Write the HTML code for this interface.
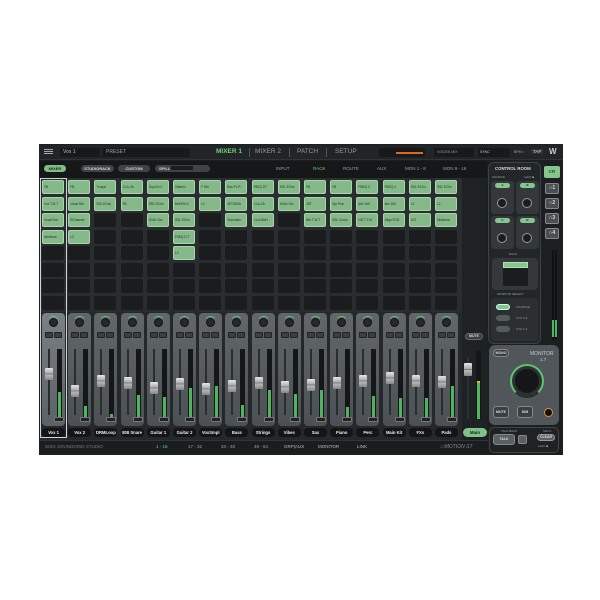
<!DOCTYPE html>
<html><head><meta charset="utf-8"><style>
*{box-sizing:border-box;margin:0;padding:0}
body{width:600px;height:600px;background:#fff;position:relative;overflow:hidden;font-family:"Liberation Sans",sans-serif}
.a{position:absolute}
#p{left:39px;top:144px;width:524px;height:311px;background:#1c1f21}
.t{position:absolute;font-size:5px;color:#9aa0a4;white-space:nowrap}
.col{position:absolute;top:180px;width:22px}
.c{height:14px;margin-bottom:2.5px;background:#1a1c1d;border-radius:2px;font-size:3.2px;color:#1d2a1e;padding:4px 1px;overflow:hidden;white-space:nowrap}
.c.g{background:#86b98a;border:1px solid #a8d6aa}
.s{position:absolute;top:313px;width:23px;height:113px;background:linear-gradient(#626769,#4b5054);border-radius:4px}
.k{position:absolute;left:7px;top:5px;width:9px;height:9px;border-radius:50%;background:#262829;border:1.5px solid #101112}
.k:before{content:"";position:absolute;left:-3px;top:-3px;right:-3px;bottom:-3px;border-radius:50%;border:1.2px solid transparent;border-top-color:#5fc46e}
.m{position:absolute;top:19px;width:8px;height:6px;background:#3b3f42;border:1px solid #222;border-radius:1px}
.tr{position:absolute;left:6px;top:36px;width:2px;height:66px;background:#2a2d2f}
.me{position:absolute;left:15px;top:36px;width:5px;height:69px;background:#141617}
.lv{position:absolute;left:1px;bottom:0;width:3px;background:#4fb35f}
.h{position:absolute;left:3px;width:8px;height:12px;background:linear-gradient(#e6e6e6,#aaa 45%,#555 50%,#bbb 55%,#888);border-radius:1px}
.v{position:absolute;left:12px;top:104px;width:10px;height:5px;background:#222;border:1px solid #777;border-radius:1px}
.n{position:absolute;top:115px;left:0;width:23px;height:9px;background:#121415;border-radius:4px;color:#eee;font-size:4.2px;font-weight:bold;text-align:center;line-height:9px;white-space:nowrap;overflow:hidden}
.btn{position:absolute;border-radius:5px;font-size:4px;text-align:center;color:#ddd;font-weight:bold}
</style></head><body>
<div id="p" class="a"></div>
<!-- top bar -->
<div class="a" style="left:39px;top:145px;width:524px;height:15px;background:#222527;border-bottom:1px solid #333"></div>
<div class="a" style="left:44px;top:149px;width:9px;height:1px;background:#aaa;box-shadow:0 2px #aaa,0 4px #aaa"></div>
<div class="a" style="left:60px;top:148px;width:40px;height:9px;background:#17191a"></div>
<div class="t" style="left:63px;top:149px;color:#bbb">Vox 1</div>
<div class="a" style="left:102px;top:148px;width:88px;height:9px;background:#17191a"></div>
<div class="t" style="left:106px;top:149px">PRESET</div>
<div class="t" style="left:216px;top:148px;font-size:6.5px;color:#6fd07c;font-weight:bold">MIXER 1</div>
<div class="a" style="left:249px;top:148px;width:1px;height:9px;background:#555"></div>
<div class="t" style="left:255px;top:148px;font-size:6.5px;color:#999">MIXER 2</div>
<div class="a" style="left:289px;top:148px;width:1px;height:9px;background:#555"></div>
<div class="t" style="left:297px;top:148px;font-size:6.5px;color:#999">PATCH</div>
<div class="a" style="left:326px;top:148px;width:1px;height:9px;background:#555"></div>
<div class="t" style="left:335px;top:148px;font-size:6.5px;color:#999">SETUP</div>
<div class="a" style="left:379px;top:148px;width:46px;height:9px;background:#17191a"></div>
<div class="a" style="left:396px;top:152px;width:27px;height:1.5px;background:#e06a1c"></div>
<div class="a" style="left:434px;top:148px;width:40px;height:9px;background:#17191a"></div>
<div class="t" style="left:437px;top:150px;font-size:3.5px">VOICES  MIX</div>
<div class="a" style="left:478px;top:148px;width:32px;height:9px;background:#17191a"></div>
<div class="t" style="left:480px;top:150px;font-size:3.5px;color:#ccc">SYNC</div>
<div class="t" style="left:514px;top:150px;font-size:3.5px">BPM <span style="color:#e8a020">•</span></div>
<div class="t" style="left:531px;top:149px;font-size:4.5px;color:#ddd;background:#333;padding:0 2px">TAP</div>
<div class="t" style="left:549px;top:147px;font-size:8px;color:#ccc;font-weight:bold">W</div>
<!-- tab row -->
<div class="a" style="left:39px;top:161px;width:448px;height:17px;background:#151718"></div>
<div class="btn" style="left:44px;top:165px;width:22px;height:7px;background:#7fbf87;color:#1a2a1c;line-height:7px">MIXER</div>
<div class="btn" style="left:81px;top:165px;width:33px;height:7px;background:#3e4346;line-height:7px">STUDIORACK</div>
<div class="btn" style="left:118px;top:165px;width:32px;height:7px;background:#3e4346;line-height:7px">CUSTOM</div>
<div class="btn" style="left:155px;top:165px;width:55px;height:7px;background:#3e4346;line-height:7px;text-align:left;padding-left:4px">SPILL <span style="display:inline-block;width:22px;height:4px;background:#1b1d1e"></span></div>
<div class="t" style="left:276px;top:166px;font-size:4.5px">INPUT</div>
<div class="t" style="left:313px;top:166px;font-size:4.5px;color:#6fd07c">RACK</div>
<div class="t" style="left:343px;top:166px;font-size:4.5px">ROUTE</div>
<div class="t" style="left:377px;top:166px;font-size:4.5px">AUX</div>
<div class="t" style="left:405px;top:166px;font-size:4.5px">MON 1 - 8</div>
<div class="t" style="left:443px;top:166px;font-size:4.5px">MON 9 - 16</div>
<!-- grid bg -->
<div class="a" style="left:40px;top:178px;width:422px;height:134px;background:#2a2d2f"></div>
<div class="a" style="left:462px;top:178px;width:25px;height:250px;background:#1f2224"></div>

<div class="col" style="left:42px"><div class="c g">FB</div><div class="c g">Vox T-R-7</div><div class="c g">Vocal Rdr</div><div class="c g">Mixfence</div><div class="c"></div><div class="c"></div><div class="c"></div><div class="c"></div></div>
<div class="col" style="left:68.2px"><div class="c g">FB</div><div class="c g">Vocal Rdr</div><div class="c g">RChannel</div><div class="c g">L2</div><div class="c"></div><div class="c"></div><div class="c"></div><div class="c"></div></div>
<div class="col" style="left:94.4px"><div class="c g">Torque</div><div class="c g">SSL EChn</div><div class="c"></div><div class="c"></div><div class="c"></div><div class="c"></div><div class="c"></div><div class="c"></div></div>
<div class="col" style="left:120.6px"><div class="c g">CLA-2A</div><div class="c g">FB</div><div class="c"></div><div class="c"></div><div class="c"></div><div class="c"></div><div class="c"></div><div class="c"></div></div>
<div class="col" style="left:146.8px"><div class="c g">Sup.Dn.C</div><div class="c g">SSL EChn</div><div class="c g">OvDv Sm</div><div class="c"></div><div class="c"></div><div class="c"></div><div class="c"></div><div class="c"></div></div>
<div class="col" style="left:173px"><div class="c g">Vitamin</div><div class="c g">MHxRh S</div><div class="c g">SSL EChn</div><div class="c g">F6EQ D T</div><div class="c g">L2</div><div class="c"></div><div class="c"></div><div class="c"></div></div>
<div class="col" style="left:199.2px"><div class="c g">F Mix</div><div class="c g">L2</div><div class="c"></div><div class="c"></div><div class="c"></div><div class="c"></div><div class="c"></div><div class="c"></div></div>
<div class="col" style="left:225.4px"><div class="c g">Bss PL R</div><div class="c g">API 550A</div><div class="c g">Submarin</div><div class="c"></div><div class="c"></div><div class="c"></div><div class="c"></div><div class="c"></div></div>
<div class="col" style="left:251.6px"><div class="c g">F6EQ DT</div><div class="c g">CLA-2A</div><div class="c g">CLA MixH</div><div class="c"></div><div class="c"></div><div class="c"></div><div class="c"></div><div class="c"></div></div>
<div class="col" style="left:277.8px"><div class="c g">SSL EChn</div><div class="c g">OvDv Sm</div><div class="c"></div><div class="c"></div><div class="c"></div><div class="c"></div><div class="c"></div><div class="c"></div></div>
<div class="col" style="left:304px"><div class="c g">FB</div><div class="c g">JST</div><div class="c g">Mix T W T</div><div class="c"></div><div class="c"></div><div class="c"></div><div class="c"></div><div class="c"></div></div>
<div class="col" style="left:330.2px"><div class="c g">FB</div><div class="c g">Spr Pub</div><div class="c g">SSL Comp</div><div class="c"></div><div class="c"></div><div class="c"></div><div class="c"></div><div class="c"></div></div>
<div class="col" style="left:356.4px"><div class="c g">FBEQ 4</div><div class="c g">dbx 160</div><div class="c g">NR T 3 M</div><div class="c"></div><div class="c"></div><div class="c"></div><div class="c"></div><div class="c"></div></div>
<div class="col" style="left:382.6px"><div class="c g">FBEQ 4</div><div class="c g">dbx 160</div><div class="c g">Align R 30</div><div class="c"></div><div class="c"></div><div class="c"></div><div class="c"></div><div class="c"></div></div>
<div class="col" style="left:408.8px"><div class="c g">SSL EChn</div><div class="c g">L2</div><div class="c g">JST</div><div class="c"></div><div class="c"></div><div class="c"></div><div class="c"></div><div class="c"></div></div>
<div class="col" style="left:435px"><div class="c g">SSL EChn</div><div class="c g">L2</div><div class="c g">Mixfence</div><div class="c"></div><div class="c"></div><div class="c"></div><div class="c"></div><div class="c"></div></div>

<!-- strips -->
<div class="a" style="left:40px;top:312px;width:422px;height:128px;background:#25282a"></div>
<div class="s" style="left:42px;background:linear-gradient(#7b8084,#5c6165)"><div class="k"></div><div class="m" style="left:3px"></div><div class="m" style="left:12px"></div><div class="tr"></div><div class="me"><div class="lv" style="height:26px"></div></div><div class="h" style="top:55px"></div><div class="v"></div><div class="n">Vox 1</div></div>
<div class="s" style="left:68.2px"><div class="k"></div><div class="m" style="left:3px"></div><div class="m" style="left:12px"></div><div class="tr"></div><div class="me"><div class="lv" style="height:12px"></div></div><div class="h" style="top:72px"></div><div class="v"></div><div class="n">Vox 2</div></div>
<div class="s" style="left:94.4px"><div class="k"></div><div class="m" style="left:3px"></div><div class="m" style="left:12px"></div><div class="tr"></div><div class="me"><div class="lv" style="height:4px"></div></div><div class="h" style="top:62px"></div><div class="v"></div><div class="n">DRMLoop</div></div>
<div class="s" style="left:120.6px"><div class="k"></div><div class="m" style="left:3px"></div><div class="m" style="left:12px"></div><div class="tr"></div><div class="me"><div class="lv" style="height:23px"></div></div><div class="h" style="top:64px"></div><div class="v"></div><div class="n">808 Snare</div></div>
<div class="s" style="left:146.8px"><div class="k"></div><div class="m" style="left:3px"></div><div class="m" style="left:12px"></div><div class="tr"></div><div class="me"><div class="lv" style="height:21px"></div></div><div class="h" style="top:69px"></div><div class="v"></div><div class="n">Guitar 1</div></div>
<div class="s" style="left:173px"><div class="k"></div><div class="m" style="left:3px"></div><div class="m" style="left:12px"></div><div class="tr"></div><div class="me"><div class="lv" style="height:30px"></div></div><div class="h" style="top:65px"></div><div class="v"></div><div class="n">Guitar 2</div></div>
<div class="s" style="left:199.2px"><div class="k"></div><div class="m" style="left:3px"></div><div class="m" style="left:12px"></div><div class="tr"></div><div class="me"><div class="lv" style="height:32px"></div></div><div class="h" style="top:70px"></div><div class="v"></div><div class="n">VoxSmpl</div></div>
<div class="s" style="left:225.4px"><div class="k"></div><div class="m" style="left:3px"></div><div class="m" style="left:12px"></div><div class="tr"></div><div class="me"><div class="lv" style="height:13px"></div></div><div class="h" style="top:67px"></div><div class="v"></div><div class="n">Bass</div></div>
<div class="s" style="left:251.6px"><div class="k"></div><div class="m" style="left:3px"></div><div class="m" style="left:12px"></div><div class="tr"></div><div class="me"><div class="lv" style="height:28px"></div></div><div class="h" style="top:64px"></div><div class="v"></div><div class="n">Strings</div></div>
<div class="s" style="left:277.8px"><div class="k"></div><div class="m" style="left:3px"></div><div class="m" style="left:12px"></div><div class="tr"></div><div class="me"><div class="lv" style="height:24px"></div></div><div class="h" style="top:68px"></div><div class="v"></div><div class="n">Vibes</div></div>
<div class="s" style="left:304px"><div class="k"></div><div class="m" style="left:3px"></div><div class="m" style="left:12px"></div><div class="tr"></div><div class="me"><div class="lv" style="height:28px"></div></div><div class="h" style="top:66px"></div><div class="v"></div><div class="n">Sax</div></div>
<div class="s" style="left:330.2px"><div class="k"></div><div class="m" style="left:3px"></div><div class="m" style="left:12px"></div><div class="tr"></div><div class="me"><div class="lv" style="height:11px"></div></div><div class="h" style="top:64px"></div><div class="v"></div><div class="n">Piano</div></div>
<div class="s" style="left:356.4px"><div class="k"></div><div class="m" style="left:3px"></div><div class="m" style="left:12px"></div><div class="tr"></div><div class="me"><div class="lv" style="height:22px"></div></div><div class="h" style="top:62px"></div><div class="v"></div><div class="n">Perc</div></div>
<div class="s" style="left:382.6px"><div class="k"></div><div class="m" style="left:3px"></div><div class="m" style="left:12px"></div><div class="tr"></div><div class="me"><div class="lv" style="height:20px"></div></div><div class="h" style="top:59px"></div><div class="v"></div><div class="n">Main Kit</div></div>
<div class="s" style="left:408.8px"><div class="k"></div><div class="m" style="left:3px"></div><div class="m" style="left:12px"></div><div class="tr"></div><div class="me"><div class="lv" style="height:20px"></div></div><div class="h" style="top:62px"></div><div class="v"></div><div class="n">FXs</div></div>
<div class="s" style="left:435px"><div class="k"></div><div class="m" style="left:3px"></div><div class="m" style="left:12px"></div><div class="tr"></div><div class="me"><div class="lv" style="height:32px"></div></div><div class="h" style="top:63px"></div><div class="v"></div><div class="n">Pads</div></div>
<!-- ch1 highlight -->
<div class="a" style="left:40px;top:178px;width:27px;height:260px;border:1px solid #cfd3d5;border-bottom-width:1.5px"></div>

<!-- main -->
<div class="btn" style="left:465px;top:333px;width:18px;height:7px;background:#3a3f42;border:1px solid #666;line-height:5px;font-size:3.5px">MUTE</div>
<div class="a" style="left:467px;top:357px;width:2px;height:62px;background:#2c2f31"></div>
<div class="a" style="left:464px;top:363px;width:8px;height:13px;background:linear-gradient(#e6e6e6,#aaa 45%,#555 50%,#bbb 55%,#888);border-radius:1px"></div>
<div class="a" style="left:476px;top:351px;width:5px;height:68px;background:#141617"><div class="a" style="left:1px;top:30px;width:3px;height:38px;background:#4fb35f;border-top:2px solid #d8c030"></div></div>
<div class="btn" style="left:463px;top:428px;width:24px;height:9px;background:#7fc189;color:#152017;line-height:9px;font-size:4.5px">Main</div>

<!-- bottom bar -->
<div class="a" style="left:40px;top:440px;width:448px;height:13px;background:#1a1d1f;border-top:1px solid #333"></div>
<div class="t" style="left:45px;top:444px;font-size:4.5px;color:#777">WSG SOUNDGRID STUDIO</div>
<div class="t" style="left:156px;top:444px;font-size:4.5px;color:#6fd07c">1 - 16</div>
<div class="t" style="left:188px;top:444px;font-size:4.5px">17 - 32</div>
<div class="t" style="left:221px;top:444px;font-size:4.5px">33 - 48</div>
<div class="t" style="left:254px;top:444px;font-size:4.5px">49 - 64</div>
<div class="t" style="left:284px;top:444px;font-size:4.5px;color:#bbb">GRP|AUX</div>
<div class="t" style="left:318px;top:444px;font-size:4.5px;color:#bbb">MONITOR</div>
<div class="t" style="left:357px;top:444px;font-size:4.5px;color:#bbb">LINK</div>
<div class="t" style="left:440px;top:444px;font-size:5px;color:#888;font-style:italic">▭MOTION ST</div>

<!-- control room -->
<div class="a" style="left:488px;top:162px;width:53px;height:182px;background:#222628;border:1px solid #3d4245;border-radius:6px"></div>
<div class="t" style="left:495px;top:166px;font-size:4.3px;color:#ddd;font-weight:bold">CONTROL ROOM</div>
<div class="t" style="left:492px;top:175px;font-size:3px">SOURCE</div>
<div class="t" style="left:524px;top:175px;font-size:3px">Latch <span style="color:#7fe08a">■</span></div>
<div class="a" style="left:491px;top:181px;width:23px;height:33px;background:#34383b;border-radius:4px"></div>
<div class="a" style="left:516px;top:181px;width:23px;height:33px;background:#34383b;border-radius:4px"></div>
<div class="a" style="left:491px;top:216px;width:23px;height:33px;background:#34383b;border-radius:4px"></div>
<div class="a" style="left:516px;top:216px;width:23px;height:33px;background:#34383b;border-radius:4px"></div>
<div class="btn" style="left:495px;top:183px;width:15px;height:5px;background:#86c68e;color:#123;font-size:3px;line-height:5px">A</div>
<div class="btn" style="left:520px;top:183px;width:15px;height:5px;background:#86c68e;color:#123;font-size:3px;line-height:5px">B</div>
<div class="btn" style="left:495px;top:218px;width:15px;height:5px;background:#86c68e;color:#123;font-size:3px;line-height:5px">C</div>
<div class="btn" style="left:520px;top:218px;width:15px;height:5px;background:#86c68e;color:#123;font-size:3px;line-height:5px">D</div>
<div class="a" style="left:497px;top:198px;width:10px;height:10px;border-radius:50%;background:#1a1c1d;border:1.5px solid #999"></div>
<div class="a" style="left:522px;top:198px;width:10px;height:10px;border-radius:50%;background:#1a1c1d;border:1.5px solid #999"></div>
<div class="a" style="left:497px;top:233px;width:10px;height:10px;border-radius:50%;background:#1a1c1d;border:1.5px solid #999"></div>
<div class="a" style="left:522px;top:233px;width:10px;height:10px;border-radius:50%;background:#1a1c1d;border:1.5px solid #999"></div>
<div class="t" style="left:509px;top:252px;font-size:3px">RACK</div>
<div class="a" style="left:492px;top:258px;width:46px;height:32px;background:#34383b;border-radius:4px"></div>
<div class="a" style="left:503px;top:262px;width:25px;height:6px;background:#86c68e;border:1px solid #aee0b2"></div>
<div class="a" style="left:503px;top:268px;width:25px;height:18px;background:#1a1c1d"></div>
<div class="t" style="left:497px;top:292px;font-size:3px">MONITOR SELECT</div>
<div class="a" style="left:491px;top:298px;width:47px;height:43px;background:#2b2f31;border-radius:4px"></div>
<div class="a" style="left:496px;top:304px;width:14px;height:6px;border-radius:3px;background:#86c68e;border:1px solid #cfe"></div>
<div class="a" style="left:496px;top:315px;width:14px;height:6px;border-radius:3px;background:#555a5d"></div>
<div class="a" style="left:496px;top:326px;width:14px;height:6px;border-radius:3px;background:#555a5d"></div>
<div class="t" style="left:516px;top:305px;font-size:3px">C/L/R/LFE</div>
<div class="t" style="left:516px;top:316px;font-size:3px">CTC 1-2</div>
<div class="t" style="left:516px;top:327px;font-size:3px">CTC 1-2</div>
<!-- CR side -->
<div class="btn" style="left:544px;top:166px;width:16px;height:12px;background:#86c68e;color:#152;line-height:12px;font-size:4.5px;border-radius:2px">CR</div>
<div class="btn" style="left:545px;top:183px;width:14px;height:11px;background:#4a4f52;border:1px solid #888;border-radius:2px;line-height:9px;font-size:5px">∩1</div>
<div class="btn" style="left:545px;top:198px;width:14px;height:11px;background:#4a4f52;border:1px solid #888;border-radius:2px;line-height:9px;font-size:5px">∩2</div>
<div class="btn" style="left:545px;top:213px;width:14px;height:11px;background:#4a4f52;border:1px solid #888;border-radius:2px;line-height:9px;font-size:5px">∩3</div>
<div class="btn" style="left:545px;top:228px;width:14px;height:11px;background:#4a4f52;border:1px solid #888;border-radius:2px;line-height:9px;font-size:5px">∩4</div>
<div class="a" style="left:552px;top:250px;width:2px;height:90px;background:#111"></div>
<div class="a" style="left:555px;top:250px;width:2px;height:90px;background:#111"></div>
<div class="a" style="left:552px;top:320px;width:2px;height:17px;background:#4fb35f"></div>
<div class="a" style="left:555px;top:320px;width:2px;height:17px;background:#4fb35f"></div>
<!-- monitor -->
<div class="a" style="left:489px;top:345px;width:70px;height:80px;background:#50565a;border-radius:6px"></div>
<div class="btn" style="left:493px;top:349px;width:16px;height:8px;background:#3a3f42;border:1px solid #888;line-height:6px;font-size:3.5px">MONO</div>
<div class="t" style="left:530px;top:351px;font-size:5px;color:#ccc">MONITOR</div>
<div class="t" style="left:540px;top:357px;font-size:4.5px;color:#ccc">1.7</div>
<div class="a" style="left:510px;top:364px;width:34px;height:34px;border-radius:50%;border:2.5px solid #5fc46e;border-bottom-color:#2a2e30;border-left-color:#5fc46e;background:#2d3133"></div>
<div class="a" style="left:515px;top:369px;width:24px;height:24px;border-radius:50%;background:#141617"></div>
<div class="btn" style="left:493px;top:406px;width:16px;height:12px;background:#3a3f42;border:1px solid #888;line-height:10px;font-size:3.5px;border-radius:3px">MUTE</div>
<div class="btn" style="left:517px;top:406px;width:16px;height:12px;background:#3a3f42;border:1px solid #888;line-height:10px;font-size:3.5px;border-radius:3px">DIM</div>
<div class="a" style="left:544px;top:408px;width:9px;height:9px;border-radius:50%;background:#111;border:1.5px solid #e0902a"></div>
<!-- talkback -->
<div class="a" style="left:489px;top:427px;width:70px;height:26px;background:#1f2224;border:1px solid #444;border-radius:5px"></div>
<div class="t" style="left:501px;top:429px;font-size:3px">TALK BACK</div>
<div class="t" style="left:543px;top:429px;font-size:3px">SOLO</div>
<div class="btn" style="left:493px;top:434px;width:22px;height:11px;background:#5a5f62;border:1px solid #888;line-height:9px;font-size:3.5px;border-radius:3px">TALK</div>
<div class="a" style="left:518px;top:435px;width:9px;height:9px;background:#5a5f62;border:1px solid #888;border-radius:2px"></div>
<div class="btn" style="left:537px;top:434px;width:18px;height:7px;background:#5a5f62;border:1px solid #999;line-height:5px;font-size:3.5px">CLEAR</div>
<div class="t" style="left:538px;top:444px;font-size:3px">Latch <span style="color:#7fe08a">■</span></div>
</body></html>
